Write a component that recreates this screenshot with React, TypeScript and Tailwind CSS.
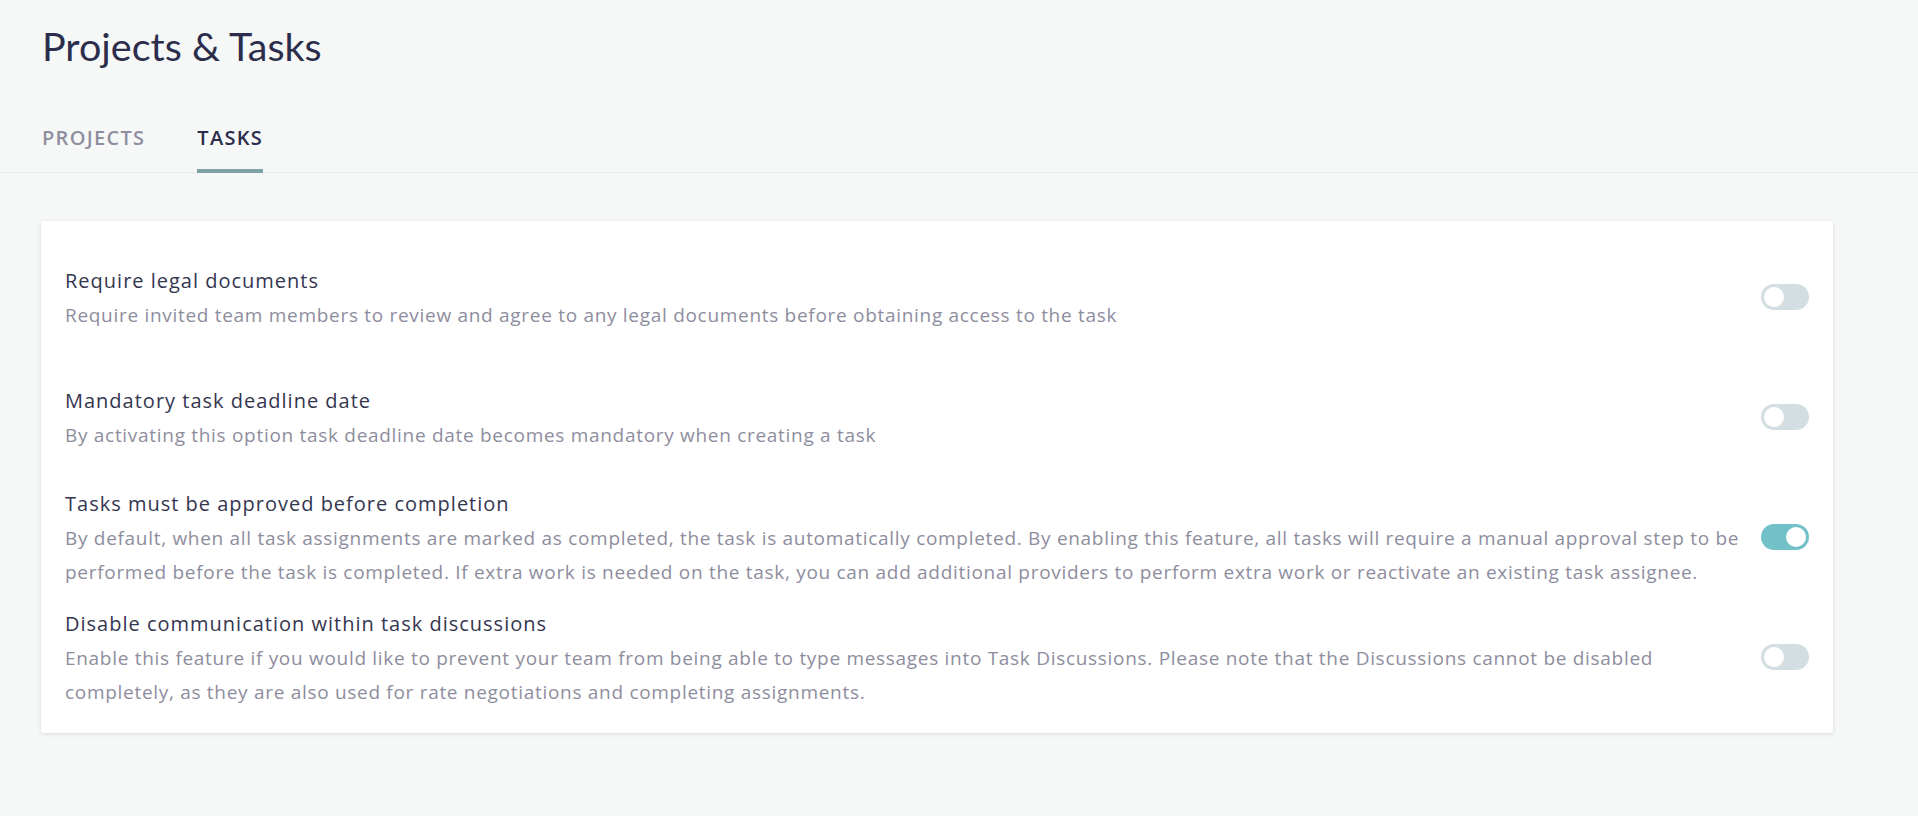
import React, { useState } from 'react';

type Setting = {
    title: string;
    description: string;
    enabled: boolean;
};

const settings: Setting[] = [
    {
        title: 'Require legal documents',
        description: 'Require invited team members to review and agree to any legal documents before obtaining access to the task',
        enabled: false,
    },
    {
        title: 'Mandatory task deadline date',
        description: 'By activating this option task deadline date becomes mandatory when creating a task',
        enabled: false,
    },
    {
        title: 'Tasks must be approved before completion',
        description:
            'By default, when all task assignments are marked as completed, the task is automatically completed. By enabling this feature, all tasks will require a manual approval step to be performed before the task is completed. If extra work is needed on the task, you can add additional providers to perform extra work or reactivate an existing task assignee.',
        enabled: true,
    },
    {
        title: 'Disable communication within task discussions',
        description:
            'Enable this feature if you would like to prevent your team from being able to type messages into Task Discussions. Please note that the Discussions cannot be disabled completely, as they are also used for rate negotiations and completing assignments.',
        enabled: false,
    },
];

function Toggle({ checked, onChange }: { checked: boolean; onChange: () => void }) {
    return (
        <button
            type="button"
            onClick={onChange}
            className={`relative h-[26px] w-[48px] shrink-0 rounded-full transition-colors ${checked ? 'bg-[#73c1c8]' : 'bg-[#d3dee2]'}`}
        >
            <span
                className={`absolute top-[3px] h-[20px] w-[20px] rounded-full bg-white transition-all ${checked ? 'left-[25px]' : 'left-[3px]'}`}
            />
        </button>
    );
}

export default function App() {
    const [values, setValues] = useState(settings.map((s) => s.enabled));
    const [tab, setTab] = useState('tasks');

    return (
        <div className="min-h-[816px] w-full bg-[#f6f8f8] font-['Open_Sans',sans-serif]">
            <div className="border-b border-[#e9eded] px-[42px]">
                <h1 className="pt-[21px] font-['Lato',sans-serif] text-[39.5px] leading-[50px] text-[#2b2d4b]">
                    Projects &amp; Tasks
                </h1>
                <nav className="mt-[55px] flex gap-[52px]">
                    {['projects', 'tasks'].map((t) => (
                        <button
                            key={t}
                            onClick={() => setTab(t)}
                            className={`-mb-px border-b-4 pb-[19px] text-[20px] font-semibold uppercase leading-[24px] tracking-[1.3px] ${tab === t ? 'border-[#7ea3a6] text-[#2b2d4b]' : 'border-transparent text-[#8f8e9f]'}`}
                        >
                            {t}
                        </button>
                    ))}
                </nav>
            </div>

            <div className="pl-[41px] pt-[48px]">
                <div className="w-[1792px] rounded-[3px] bg-white px-6 py-4 shadow-[0_1px_4px_rgba(0,0,0,0.12)]">
                    {settings.map((setting, i) => (
                        <div key={setting.title} className="flex h-[120px] items-center gap-[6px]">
                            <div className="flex-1">
                                <div className="text-[20px] leading-[35px] tracking-[1px] text-[#34364f]">{setting.title}</div>
                                <p className="text-[19px] leading-[34px] tracking-[0.7px] text-[#8e8d9e]">{setting.description}</p>
                            </div>
                            <Toggle
                                checked={values[i]}
                                onChange={() => setValues(values.map((v, j) => (j === i ? !v : v)))}
                            />
                        </div>
                    ))}
                </div>
            </div>
        </div>
    );
}
